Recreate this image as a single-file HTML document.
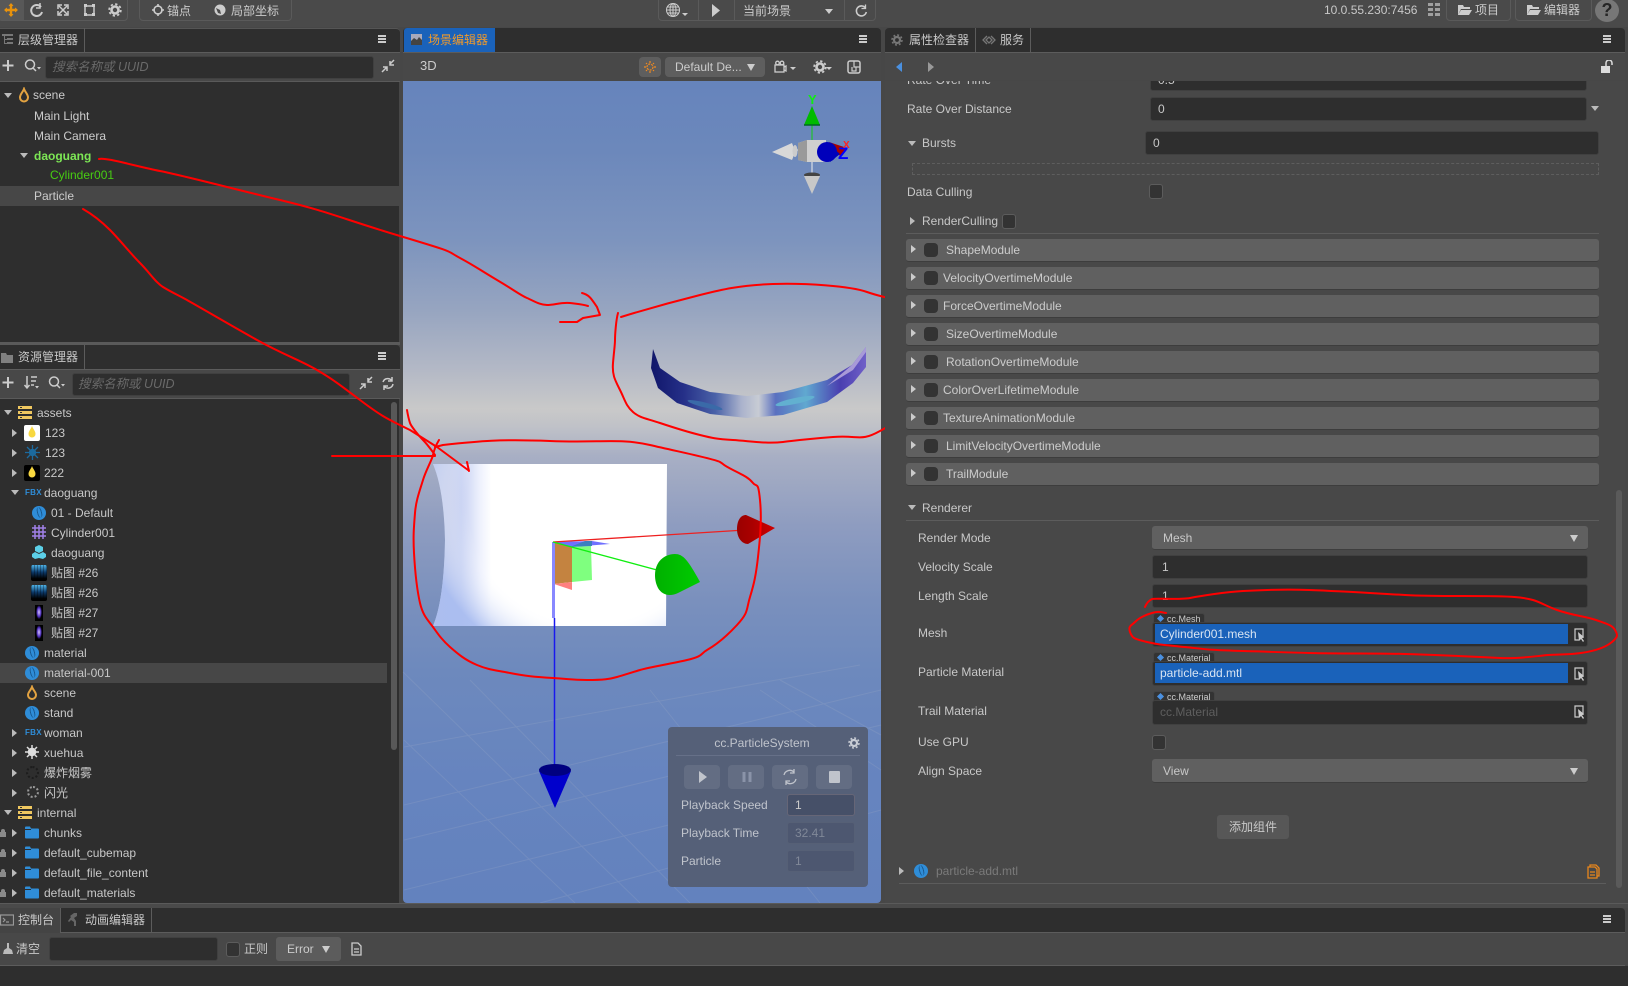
<!DOCTYPE html>
<html lang="zh"><head><meta charset="utf-8"><title>Cocos Creator</title>
<style>
html,body{margin:0;padding:0;width:1628px;height:986px;overflow:hidden;background:#474747}
body{position:relative;font:12px/20px "Liberation Sans","Noto Sans CJK SC",sans-serif;color:#c8c8c8}
.a,.t,.i,.cb,.g{position:absolute}
.t{white-space:nowrap;height:20px}
.bar{position:absolute;background:#2e2e2e;border-bottom:1px solid #5c5c5c;box-sizing:border-box}
.in{position:absolute;background:#2e2e2e;border:1px solid #404040;border-radius:3px;box-sizing:border-box}
.grp{position:absolute;top:-2px;height:23px;border:1px solid #5a5a5a;border-radius:0 0 4px 4px;box-sizing:border-box}
.sel{position:absolute;background:#606060;border-bottom:1px solid #3e3e3e;border-radius:3px;box-sizing:border-box}
.cb{width:14px;height:15px;background:#333;border:1px solid #5c5c5c;border-radius:3px;box-sizing:border-box}
.m{position:absolute;left:906px;width:693px;height:23px;background:#606060;border-radius:3px;border-bottom:1px solid #3d3d3d;box-sizing:border-box}
.m i{position:absolute;left:5px;top:6px;width:0;height:0;border-left:5px solid #ccc;border-top:4px solid transparent;border-bottom:4px solid transparent}
.m b{position:absolute;left:18px;top:4px;width:14px;height:14px;background:#333;border-radius:4px}
.m span{position:absolute;top:1px;line-height:21px;white-space:nowrap;color:#ccc}
.r,.d{position:absolute;width:0;height:0}
.r{border-left:5px solid #bbb;border-top:4px solid transparent;border-bottom:4px solid transparent}
.d{border-top:5px solid #bbb;border-left:4px solid transparent;border-right:4px solid transparent}
.ham{position:absolute;width:8px;height:8px;box-sizing:border-box;border-top:2px solid #ccc;border-bottom:2px solid #ccc}
.ham:after{content:"";position:absolute;left:0;right:0;top:1px;height:2px;background:#ccc}
.tag{position:absolute;height:10px;background:#333;border:1px solid #444;border-bottom:0;border-radius:3px 3px 0 0;font-size:9px;line-height:10px;color:#ccc;padding-left:13px;box-sizing:border-box}
.tag:before{content:"";position:absolute;left:4px;top:2px;width:5px;height:5px;background:#4a90e0;transform:rotate(45deg)}
.blue{position:absolute;background:#1a62ba;color:#d8e4f2;line-height:20px;padding-left:5px;box-sizing:border-box}
.mat{position:absolute;width:14px;height:14px;border-radius:50%;background:#2f8dd8}
.mat:after{content:"";position:absolute;left:5px;top:1px;width:3px;height:11px;border-left:1px solid #17568c;border-right:1px solid #17568c;border-radius:50%;transform:rotate(-15deg)}
.pb{position:absolute;top:765px;width:36px;height:24px;background:#636d83;border-radius:4px}
.pi{position:absolute;left:787px;width:68px;height:22px;border:1px solid #566076;border-radius:3px;box-sizing:border-box;line-height:20px;padding-left:7px}
.dk{position:absolute;width:16px;height:16px;border-radius:2px;background:repeating-linear-gradient(90deg,rgba(0,0,0,.3) 0 1px,transparent 1px 3px),linear-gradient(#4fb4e8,#0c3a6a 45%,#000 85%)}
.pr{position:absolute;width:8px;height:16px;background:radial-gradient(ellipse 3px 7px at 50% 45%,#d8c8ff,#5030c0 65%,#000 100%)}
</style></head><body>

<svg width="0" height="0" style="position:absolute"><defs>
<symbol id="db" viewBox="0 0 14 13"><path d="M0 0h14v3H0zM0 5h14v3H0zM0 10h14v3H0z" fill="#f0c860"/><path d="M2 1h2v1H2zM2 6h2v1H2zM2 11h2v1H2z" fill="#333"/></symbol>
<symbol id="fo" viewBox="0 0 14 13"><path d="M0 1.500A1 1 0 0 1 1 .5h4l1 2h7a1 1 0 0 1 1 1v8a1 1 0 0 1-1 1H1a1 1 0 0 1-1-1z" fill="#2f8dd8"/><path d="M0 3h6v1H0z" fill="#2e2e2e"/></symbol>
<symbol id="lk" viewBox="0 0 8 8"><path d="M2 3V2a2 2 0 0 1 4 0v1h1v5H1V3z" fill="#8a8a8a"/></symbol>
<symbol id="gear" viewBox="0 0 14 14"><circle cx="7" cy="7" r="3.500" fill="none" stroke="currentColor" stroke-width="2.600"/><circle cx="7" cy="7" r="5.800" fill="none" stroke="currentColor" stroke-width="1.800" stroke-dasharray="2.300 2.250"/></symbol>
</defs></svg>

<!-- TOP TOOLBAR -->
<div class="a" style="left:0;top:0;width:1628px;height:27px;background:#4a4a4a"></div>
<div class="grp" style="left:-2px;width:130px"></div>
<div class="a" style="left:0;top:0;width:24px;height:20px;background:#585858"></div>
<svg class="a" style="left:0;top:0" width="130" height="22" fill="none" stroke="#ccc" stroke-width="2">
<path d="M11 4v12M5 10h12" stroke="#e8920c" stroke-width="2.400"/><path d="M11 3l-2.500 3h5zM11 17l-2.500-3h5zM4 10l3-2.500v5zM18 10l-3-2.500v5z" fill="#e8920c" stroke="none"/>
<path d="M41 7a5.500 5.500 0 1 0 1 5"/><path d="M40 3v5h-4" stroke-width="1.500"/>
<path d="M59 6l8 8M67 6l-8 8" stroke-width="1.500"/><path d="M58 9V5h4M64 5h4v4M68 11v4h-4M62 15h-4v-4" stroke-width="1.500"/>
<rect x="85" y="6" width="9" height="9" stroke-width="1.500"/><rect x="84" y="4" width="3" height="3" fill="#ccc" stroke="none"/><rect x="92" y="4" width="3" height="3" fill="#ccc" stroke="none"/><rect x="84" y="13" width="3" height="3" fill="#ccc" stroke="none"/><rect x="92" y="13" width="3" height="3" fill="#ccc" stroke="none"/>
</svg>
<svg class="a" style="left:108px;top:3px;color:#ccc" width="14" height="14"><use href="#gear"/></svg>
<div class="grp" style="left:139px;width:153px"></div>
<svg class="a" style="left:150px;top:2px" width="80" height="18" fill="none" stroke="#ccc" stroke-width="1.600"><circle cx="8" cy="8" r="4"/><path d="M8 2v3M8 11v3M2 8h3M11 8h3"/><circle cx="70" cy="8" r="5.500" fill="#ccc" stroke="none"/><path d="M66 6l4 2 1 4-3-1z" fill="#4a4a4a" stroke="none"/></svg>
<div class="t" style="left:167px;top:1px;color:#ccc">锚点</div>
<div class="t" style="left:231px;top:1px;color:#ccc">局部坐标</div>
<div class="grp" style="left:658px;width:218px"></div>
<div class="a" style="left:698px;top:0;width:1px;height:21px;background:#5a5a5a"></div>
<div class="a" style="left:734px;top:0;width:1px;height:21px;background:#5a5a5a"></div>
<div class="a" style="left:844px;top:0;width:1px;height:21px;background:#5a5a5a"></div>
<svg class="a" style="left:665px;top:2px" width="26" height="18" fill="none" stroke="#ccc" stroke-width="1"><circle cx="8" cy="8" r="6.500"/><ellipse cx="8" cy="8" rx="3" ry="6.500"/><path d="M1.500 8h13M2.500 5h11M2.500 11h11M8 1.500v13"/><path d="M17 11h6l-3 3z" fill="#ccc" stroke="none"/></svg>
<svg class="a" style="left:710px;top:3px" width="14" height="16"><path d="M2 1l8 6.500-8 6.500z" fill="#ccc"/></svg>
<div class="t" style="left:743px;top:1px;color:#ccc">当前场景</div>
<div class="d" style="left:825px;top:9px;border-top-color:#ccc;border-left-width:4px;border-right-width:4px"></div>
<svg class="a" style="left:853px;top:3px" width="16" height="16" fill="none" stroke="#ccc" stroke-width="1.600"><path d="M12.500 5a5 5 0 1 0 .8 4"/><path d="M12.500 1.500V5.500H8.500" stroke-width="1.300"/></svg>
<div class="t" style="left:1324px;top:0;color:#c8c8c8">10.0.55.230:7456</div>
<svg class="a" style="left:1428px;top:3px" width="13" height="13" fill="#a0a0a0"><rect x="0" y="0" width="5" height="3"/><rect x="7" y="0" width="5" height="3"/><rect x="0" y="5" width="5" height="3"/><rect x="7" y="5" width="5" height="3"/><rect x="0" y="10" width="5" height="3"/><rect x="7" y="10" width="5" height="3"/></svg>
<div class="grp" style="left:1446px;width:65px"></div>
<div class="grp" style="left:1515px;width:77px"></div>
<svg class="a" style="left:1458px;top:4px" width="14" height="12"><path d="M0 1h5l1 2h6v2H3L0 11zM3 6h11l-3 5H0z" fill="#ccc"/></svg>
<svg class="a" style="left:1527px;top:4px" width="14" height="12"><path d="M0 1h5l1 2h6v2H3L0 11zM3 6h11l-3 5H0z" fill="#ccc"/></svg>
<div class="t" style="left:1475px;top:0;color:#ccc">项目</div>
<div class="t" style="left:1544px;top:0;color:#ccc">编辑器</div>
<div class="a" style="left:1595px;top:-1px;width:24px;height:23px;border-radius:50%;background:#777;text-align:center;font-weight:bold;font-size:18px;line-height:23px;color:#262626">?</div>

<!-- HIERARCHY -->
<div class="bar" style="left:0;top:28px;width:400px;height:25px;border-radius:0 4px 0 0;border-top:1px solid #555"></div>
<div class="a" style="left:84px;top:28px;width:1px;height:24px;background:#5c5c5c"></div>
<svg class="a" style="left:2px;top:33px" width="12" height="13" fill="#777"><path d="M0 1h11v2H0zM5 5h6v2H5zM5 9h6v2H5zM2 3h1v8H2zM2 6h3v1H2zM2 10h3v1H2z"/></svg>
<div class="t" style="left:18px;top:30px">层级管理器</div>
<div class="ham" style="left:378px;top:35px"></div>
<div class="a" style="left:0;top:53px;width:400px;height:29px;background:#484848;border-bottom:1px solid #5a5a5a;box-sizing:border-box"></div>
<svg class="a" style="left:0;top:54px" width="45" height="24" fill="none" stroke="#ccc"><path d="M8 6v11M2.500 11.500h11" stroke-width="2"/><circle cx="30" cy="10.500" r="4.500" stroke-width="1.500"/><path d="M33 14l3 3" stroke-width="1.500"/><path d="M37 13h4l-2 2.500z" fill="#ccc" stroke="none"/></svg>
<div class="in" style="left:45px;top:56px;width:329px;height:23px"></div>
<div class="t" style="left:52px;top:57px;font-style:italic;color:#6a6a6a;font-size:12.500px">搜索名称或 UUID</div>
<svg class="a" style="left:381px;top:59px" width="15" height="15" fill="none" stroke="#ccc" stroke-width="1.500"><path d="M1 13l5-5M2 8h4v4M13 1L9 5M9 2v4h4" /></svg>
<div class="a" style="left:0;top:82px;width:399px;height:260px;background:#2e2e2e"></div>
<div class="d" style="left:4px;top:93px"></div>
<svg class="a" style="left:17px;top:87px" width="14" height="17" fill="none" stroke="#e3a341" stroke-width="2"><path d="M7 2C6 5 3 7 3 10.500a4 4 0 0 0 8 0C11 7 8 5 7 2z"/></svg>
<div class="t" style="left:33px;top:85px;color:#ccc">scene</div>
<div class="t" style="left:34px;top:106px;color:#ccc">Main Light</div>
<div class="t" style="left:34px;top:126px;color:#ccc">Main Camera</div>
<div class="d" style="left:20px;top:153px"></div>
<div class="t" style="left:34px;top:146px;color:#7de855;font-weight:bold">daoguang</div>
<div class="t" style="left:50px;top:165px;color:#47cc12">Cylinder001</div>
<div class="a" style="left:0;top:186px;width:399px;height:20px;background:#474747"></div>
<div class="t" style="left:34px;top:186px;color:#ccc">Particle</div>

<!-- ASSETS -->
<div class="a" style="left:0;top:342px;width:400px;height:3px;background:#5a5a5a"></div>
<div class="bar" style="left:0;top:345px;width:400px;height:25px;border-radius:0 4px 0 0"></div>
<div class="a" style="left:84px;top:345px;width:1px;height:24px;background:#5c5c5c"></div>
<svg class="a" style="left:1px;top:352px" width="13" height="12"><path d="M0 1h5l1 2h6v8H0z" fill="#808080"/></svg>
<div class="t" style="left:18px;top:347px">资源管理器</div>
<div class="ham" style="left:378px;top:352px"></div>
<div class="a" style="left:0;top:370px;width:400px;height:29px;background:#484848;border-bottom:1px solid #5a5a5a;box-sizing:border-box"></div>
<svg class="a" style="left:0;top:371px" width="72" height="24" fill="none" stroke="#ccc"><path d="M8 6v11M2.500 11.500h11" stroke-width="2"/><path d="M27 5v12M24.500 14l2.500 3 2.500-3M31 6h6M31 10h5M31 14h3" stroke-width="1.500"/><path d="M35 15h4l-2 2.500z" fill="#ccc" stroke="none"/><circle cx="54" cy="10.500" r="4.500" stroke-width="1.500"/><path d="M57 14l3 3" stroke-width="1.500"/><path d="M61 13h4l-2 2.500z" fill="#ccc" stroke="none"/></svg>
<div class="in" style="left:72px;top:373px;width:278px;height:23px"></div>
<div class="t" style="left:78px;top:374px;font-style:italic;color:#6a6a6a;font-size:12.500px">搜索名称或 UUID</div>
<svg class="a" style="left:359px;top:376px" width="38" height="15" fill="none" stroke="#ccc" stroke-width="1.500"><path d="M1 13l5-5M2 8h4v4M13 1L9 5M9 2v4h4"/><path d="M24 6a5 5 0 0 1 9-1M34 8a5 5 0 0 1-9 2M33 1v4h-4M25 14v-4h4"/></svg>
<div class="a" style="left:0;top:399px;width:399px;height:504px;background:#2e2e2e;overflow:hidden"></div>
<div class="a" style="left:391px;top:402px;width:6px;height:348px;background:#585858;border-radius:3px"></div>
<div class="a" style="left:0;top:663px;width:387px;height:20px;background:#474747"></div>

<div class="d" style="left:4px;top:410px"></div>
<svg class="a" style="left:18px;top:406px" width="14" height="13"><use href="#db"/></svg>
<div class="t" style="left:37px;top:403px">assets</div>
<div class="r" style="left:12px;top:429px"></div>
<div class="a" style="left:24px;top:425px;width:16px;height:16px;background:#fff;border-radius:2px"></div>
<svg class="a" style="left:28px;top:426px" width="8" height="13"><path d="M4 0C3 3 .5 5 .5 8a3.500 3.500 0 0 0 7 0C7.500 5 5 3 4 0z" fill="#f8d840"/></svg>
<div class="t" style="left:45px;top:423px">123</div>
<div class="r" style="left:12px;top:449px"></div>
<svg class="a" style="left:25px;top:445px" width="15" height="15" stroke="#1c6a9e" stroke-width="1.300" fill="none"><path d="M7.500 0v15M0 7.500h15M2 2l11 11M13 2L2 13"/><circle cx="7.500" cy="7.500" r="3" fill="#1c6a9e"/></svg>
<div class="t" style="left:45px;top:443px">123</div>
<div class="r" style="left:12px;top:469px"></div>
<div class="a" style="left:24px;top:465px;width:16px;height:16px;background:#000;border-radius:2px"></div>
<svg class="a" style="left:28px;top:466px" width="8" height="13"><path d="M4 0C3 3 .5 5 .5 8a3.500 3.500 0 0 0 7 0C7.500 5 5 3 4 0z" fill="#f8d840"/></svg>
<div class="t" style="left:44px;top:463px">222</div>
<div class="d" style="left:11px;top:490px"></div>
<div class="t" style="left:25px;top:483px;font-size:8px;font-weight:bold;color:#2f8dd8;letter-spacing:.3px">FBX</div>
<div class="t" style="left:44px;top:483px">daoguang</div>

<div class="mat" style="left:32px;top:506px"></div>
<div class="t" style="left:51px;top:503px">01 - Default</div>
<svg class="a" style="left:32px;top:525px" width="14" height="14" stroke="#a080e8" stroke-width="1.500"><path d="M3 0v14M7 0v14M11 0v14M0 3h14M0 7h14M0 11h14"/></svg>
<div class="t" style="left:51px;top:523px">Cylinder001</div>
<svg class="a" style="left:32px;top:545px" width="14" height="14" fill="#5cd0e8"><path d="M7 0l4 2v4L7 8 3 6V2zM3 7l4 2v4l-4 1-3-2V9zM11 7l3 2v3l-3 2-4-1V9z"/></svg>
<div class="t" style="left:51px;top:543px">daoguang</div>
<div class="dk" style="left:31px;top:565px"></div>
<div class="t" style="left:51px;top:563px">贴图 #26</div>
<div class="dk" style="left:31px;top:585px"></div>
<div class="t" style="left:51px;top:583px">贴图 #26</div>
<div class="pr" style="left:35px;top:605px"></div>
<div class="t" style="left:51px;top:603px">贴图 #27</div>
<div class="pr" style="left:35px;top:625px"></div>
<div class="t" style="left:51px;top:623px">贴图 #27</div>
<div class="mat" style="left:25px;top:646px"></div>
<div class="t" style="left:44px;top:643px">material</div>
<div class="mat" style="left:25px;top:666px"></div>
<div class="t" style="left:44px;top:663px">material-001</div>
<svg class="a" style="left:25px;top:685px" width="14" height="16" fill="none" stroke="#e3a341" stroke-width="2"><path d="M7 2C6 5 3 7 3 10a4 4 0 0 0 8 0C11 7 8 5 7 2z"/></svg>
<div class="t" style="left:44px;top:683px">scene</div>
<div class="mat" style="left:25px;top:706px"></div>
<div class="t" style="left:44px;top:703px">stand</div>
<div class="r" style="left:12px;top:729px"></div>
<div class="t" style="left:25px;top:723px;font-size:8px;font-weight:bold;color:#2f8dd8;letter-spacing:.3px">FBX</div>
<div class="t" style="left:44px;top:723px">woman</div>
<div class="r" style="left:12px;top:749px"></div>
<svg class="a" style="left:25px;top:745px" width="14" height="14" stroke="#ddd" stroke-width="1.500" fill="none"><path d="M7 0v14M0 7h14M2 2l10 10M12 2L2 12"/><circle cx="7" cy="7" r="3.500" fill="#ddd"/></svg>
<div class="t" style="left:44px;top:743px">xuehua</div>
<div class="r" style="left:12px;top:769px"></div>
<div class="a" style="left:26px;top:766px;width:9px;height:9px;border:2px dotted #1d1d1d;border-radius:50%"></div>
<div class="t" style="left:44px;top:763px">爆炸烟雾</div>
<div class="r" style="left:12px;top:789px"></div>
<div class="a" style="left:27px;top:786px;width:8px;height:8px;border:2px dotted #999;border-radius:50%"></div>
<div class="t" style="left:44px;top:783px">闪光</div>
<div class="d" style="left:4px;top:810px"></div>
<svg class="a" style="left:18px;top:806px" width="14" height="13"><use href="#db"/></svg>
<div class="t" style="left:37px;top:803px">internal</div>

<svg class="a" style="left:-1px;top:829px" width="8" height="8"><use href="#lk"/></svg><div class="r" style="left:12px;top:829px"></div>
<svg class="a" style="left:25px;top:826px" width="14" height="13"><use href="#fo"/></svg><div class="t" style="left:44px;top:823px">chunks</div>
<svg class="a" style="left:-1px;top:849px" width="8" height="8"><use href="#lk"/></svg><div class="r" style="left:12px;top:849px"></div>
<svg class="a" style="left:25px;top:846px" width="14" height="13"><use href="#fo"/></svg><div class="t" style="left:44px;top:843px">default_cubemap</div>
<svg class="a" style="left:-1px;top:869px" width="8" height="8"><use href="#lk"/></svg><div class="r" style="left:12px;top:869px"></div>
<svg class="a" style="left:25px;top:866px" width="14" height="13"><use href="#fo"/></svg><div class="t" style="left:44px;top:863px">default_file_content</div>
<svg class="a" style="left:-1px;top:889px" width="8" height="8"><use href="#lk"/></svg><div class="r" style="left:12px;top:889px"></div>
<svg class="a" style="left:25px;top:886px" width="14" height="13"><use href="#fo"/></svg><div class="t" style="left:44px;top:883px">default_materials</div>

<!-- SCENE -->
<div class="bar" style="left:403px;top:28px;width:478px;height:25px;border-radius:4px 4px 0 0"></div>
<div class="a" style="left:404px;top:28px;width:91px;height:24px;background:#1a62ba;border-radius:3px 0 0 0"></div>
<svg class="a" style="left:411px;top:34px" width="13" height="12"><rect width="11" height="11" fill="#aab"/><path d="M0 7l3-3 3 2 2-3 3 3v5H0z" fill="#444"/></svg>
<div class="t" style="left:428px;top:30px;color:#f19a2a">场景编辑器</div>
<div class="ham" style="left:859px;top:35px"></div>
<div class="a" style="left:403px;top:53px;width:478px;height:28px;background:#484848"></div>
<div class="t" style="left:420px;top:56px;font-size:13px;color:#ccc">3D</div>
<div class="a" style="left:639px;top:57px;width:22px;height:20px;background:#5e5e5e;border-radius:4px"></div>
<svg class="a" style="left:644px;top:61px" width="12" height="12" fill="none" stroke="#f08a20" stroke-width="1.200" stroke-dasharray="2 1"><circle cx="6" cy="6" r="3"/><path d="M6 0v2M6 10v2M0 6h2M10 6h2M2 2l1 1M9 9l1 1M10 2L9 3M3 9l-1 1"/></svg>
<div class="a" style="left:665px;top:57px;width:100px;height:20px;background:#5e5e5e;border-radius:4px"></div>
<div class="t" style="left:675px;top:57px;color:#ccc">Default De...</div>
<div class="a" style="left:747px;top:64px;width:0;height:0;border-top:7px solid #ccc;border-left:4px solid transparent;border-right:4px solid transparent"></div>
<svg class="a" style="left:774px;top:60px" width="90" height="16" fill="none" stroke="#ccc" stroke-width="1.300"><rect x="1" y="5" width="9" height="7"/><circle cx="3.500" cy="3" r="1.800"/><circle cx="8" cy="3" r="1.800"/><path d="M10 7l2-1v5l-2-1"/><path d="M16 7h6l-3 3z" fill="#ccc" stroke="none"/><path d="M52 7h6l-3 3z" fill="#ccc" stroke="none"/><rect x="74" y="1" width="12" height="12" rx="2" stroke-width="1.500"/><path d="M80 1v6h6M78 7v4h4V7" stroke-width="1.200"/></svg>
<svg class="a" style="left:813px;top:60px;color:#ccc" width="14" height="14"><use href="#gear"/></svg>

<div class="a" style="left:403px;top:81px;width:478px;height:822px;border-radius:0 0 4px 4px;overflow:hidden;background:linear-gradient(#6684bc 0,#6c88bb 70px,#7d94be 160px,#97a5c0 230px,#b4b9c6 290px,#c9c9c9 328px,#c0c2c8 345px,#a8afc4 375px,#8e9cc0 445px,#7a90bd 520px,#6d89bd 590px,#6684bf 700px,#6382be 822px)"></div>

<svg class="a" style="left:0;top:0" width="1628" height="986" fill="none">
<defs>
<linearGradient id="cr" x1="0" x2="1" y1="0" y2="0"><stop offset="0" stop-color="#10166a"/><stop offset=".15" stop-color="#252f88"/><stop offset=".3" stop-color="#4a62a8"/><stop offset=".42" stop-color="#aab2cc"/><stop offset=".5" stop-color="#c8ccd4"/><stop offset=".58" stop-color="#5a70c0"/><stop offset=".72" stop-color="#60a8d0"/><stop offset=".88" stop-color="#4a3fb0"/><stop offset="1" stop-color="#7060c8"/></linearGradient>
<linearGradient id="wh" x1="0" x2="1" y1="0" y2="0"><stop offset="0" stop-color="#d0d4e6"/><stop offset=".06" stop-color="#c8cfea"/><stop offset=".12" stop-color="#c6d0f2"/><stop offset=".2" stop-color="#eef1fd"/><stop offset=".25" stop-color="#fff"/></linearGradient>
<radialGradient id="wb" gradientUnits="userSpaceOnUse" cx="590" cy="500" r="170"><stop offset=".72" stop-color="#fff" stop-opacity="0"/><stop offset="1" stop-color="#a8bcf0" stop-opacity=".9"/></radialGradient>
<linearGradient id="rc" x1="0" x2="1"><stop offset="0" stop-color="#9a0000"/><stop offset=".4" stop-color="#aa0000"/><stop offset="1" stop-color="#d00000"/></linearGradient>
<linearGradient id="gc" x1="0" x2="1"><stop offset="0" stop-color="#00b000"/><stop offset="1" stop-color="#00cc00"/></linearGradient>
</defs>
<!-- grid -->
<g stroke="#a8b4c8" stroke-opacity=".2" stroke-width="1">
<path d="M404 747L860 665M404 805L881 690M404 840L881 725M404 890L750 805M540 903L881 810M403 672L640 903M404 740L575 903M470 680L690 903M650 690L820 903M760 690L881 770M780 680L881 735"/>
</g>
<!-- crescent -->
<path d="M653 349L651 368 658 388 677 403 710 414 747 418 783 415 827 402 853 383 866 367 866 347 852 365 827 380 783 392 747 396 710 392 680 382 660 368Z" fill="url(#cr)"/>
<path d="M852 365L866 347V352L853 370 827 386Z" fill="#a89ad8"/>
<ellipse cx="795" cy="401" rx="20" ry="3" fill="#62b0d0" transform="rotate(-12 795 401)"/>
<ellipse cx="705" cy="405" rx="18" ry="2.500" fill="#3a6aa8" transform="rotate(14 705 405)"/>
<!-- white mesh -->
<path d="M433 464H667L666 626 433 626Q444 600 445 540 444 490 433 464Z" fill="url(#wh)"/>
<path d="M433 464H667L666 626 433 626Q444 600 445 540 444 490 433 464Z" fill="url(#wb)"/>
<!-- handles -->
<path d="M553 542L592 541 610 544 570 547Z" fill="#7070ff"/>
<path d="M572 547L591 546 592 580 572 582Z" fill="#7fff7f"/>
<path d="M585 541L592 541 592 546 570 547Z" fill="#3c80c0"/>
<path d="M553 542L572 547 572 582 554 584Z" fill="#c48340"/>
<path d="M554 584L572 582 572 590Z" fill="#ff8080"/>
<path d="M553.500 542V618" stroke="#8888ff" stroke-width="3"/>
<path d="M554.500 618V770" stroke="#1818ee" stroke-width="1.500"/>
<path d="M553 542L745 530" stroke="#ee2020" stroke-width="1.300"/>
<path d="M553 542L657 570" stroke="#10ee10" stroke-width="1.300"/>
<path d="M737 529C737 520 741 515 746 515L775 528 748 544C742 544 737 538 737 529Z" fill="url(#rc)"/>
<path d="M655 575C655 562 664 554 675 554 683 554 688 560 700 582L678 593C670 597 662 595 658 588 656 584 655 580 655 575Z" fill="url(#gc)"/>
<path d="M539 771L571 771 555 808Z" fill="#0000cc"/>
<ellipse cx="555" cy="770" rx="16" ry="6" fill="#000080"/>
<!-- gizmo -->
<path d="M812 125V140" stroke="#10cc10"/>
<path d="M812 106L820 125H804Z" fill="#00bb00"/>
<path d="M804 125H820" stroke="#062" stroke-width="1.500"/>
<path d="M792 150H798M812 162V174" stroke="#eee"/>
<path d="M772 152L792 143Q796 152 792 160Z" fill="#d8d8d8"/>
<ellipse cx="795" cy="151" rx="2.500" ry="6" fill="#ccc"/>
<path d="M798 143L807 140H826V162H807L798 160Z" fill="#cfcfcf"/>
<path d="M798 143L807 140V162L798 160Z" fill="#9a9a9a"/>
<ellipse cx="812" cy="175" rx="8" ry="2.500" fill="#444"/>
<path d="M804 176H820L812 194Z" fill="#c8c8c8"/>
<path d="M829 142L847 148 840 156Z" fill="#a80000"/>
<circle cx="827" cy="152" r="10" fill="#0000bb"/>
<path d="M826 142L840 154 830 162Z" fill="#0000bb"/>
<!-- red annotations -->
<g stroke="#ff0000" stroke-width="2" stroke-linecap="round" stroke-linejoin="round">
<path d="M99 159C105 157 135 166 160 171S230 188 280 200 340 218 400 236 445 250 460 258 480 270 497 280 520 295 527 298 540 305 547 305 562 302 570 303 582 304 588 306"/>
<path d="M582 293C590 295 592 300 597 307L600 315 583 318 577 322 560 322"/>
<path d="M621 317C660 305 680 300 700 295S740 285 773 284 850 286 867 292 895 298 904 305 920 318 923 323 932 340 931.500 347 933 365 930 373 922 395 916 403 900 420 880 431 860 435 833 437 800 440 783 442 750 441 733 440 712 438 700 435 675 428 660 423 640 418 633 412 625 400 620 390 612 375 613 363 615 345 615 340 616 320 618 313"/>
<path d="M439 440C436 445 434 450 433 455S426 470 423 480 416 500 415 513 413 535 414 553 417 590 420 603 428 620 433 627 442 640 450 647 465 660 477 665 495 670 510 673 535 677 553 678 570 680 587 680 610 679 617 677 630 673 640 670 670 664 687 660 700 654 707 650 725 638 737 625 746 610 750 597 756 575 758 557 762 520 760 500 757 488 753 483 745 476 733 470 725 465 720 462 680 452 650 445 600 443 550 441 480 441 443 445L435 447"/>
<path d="M83 209C90 213 100 220 110 230S130 253 140 263 155 282 163 287 178 295 187 300 230 325 257 340 300 360 317 370 340 385 360 400 385 418 410 430L437 447 468 470"/>
<path d="M467 462L469 471"/>
<path d="M332 456H435"/>
<path d="M407 410C408 416 409 420 410 423S418 435 423 440 432 451 435 455"/>
</g>
</svg>
<div class="t" style="left:808px;top:90px;color:#10ee10;font-weight:bold;font-size:13px">Y</div>
<div class="t" style="left:838px;top:144px;color:#0000ff;font-weight:bold;font-size:17px">Z</div>
<div class="t" style="left:843px;top:136px;color:#ff2020;font-size:10px;font-weight:bold">X</div>

<!-- particle panel -->
<div class="a" style="left:668px;top:727px;width:200px;height:160px;background:#556078;border-radius:4px"></div>
<div class="t" style="left:668px;top:733px;width:188px;text-align:center;color:#c0c4cc">cc.ParticleSystem</div>
<svg class="a" style="left:848px;top:737px;color:#c8ccd4" width="12" height="12"><use href="#gear"/></svg>
<div class="a" style="left:676px;top:755px;width:184px;height:1px;background:#667088"></div>
<div class="pb" style="left:684px"></div><div class="pb" style="left:728px"></div><div class="pb" style="left:772px"></div><div class="pb" style="left:816px"></div>
<svg class="a" style="left:684px;top:765px" width="170" height="24" fill="#c0c4cc"><path d="M15 6l8 6-8 6z"/><path d="M58.500 7h3v10h-3zM64.500 7h3v10h-3z" fill="#8a93a8"/><path d="M100 10a6 6 0 0 1 10-3M112 14a6 6 0 0 1-10 3M110 4v4h-4M102 20v-4h4" fill="none" stroke="#c0c4cc" stroke-width="1.300"/><rect x="145" y="6" width="11" height="12" rx="1"/></svg>
<div class="t" style="left:681px;top:795px;color:#c0c4cc">Playback Speed</div>
<div class="pi" style="top:794px;background:#465068;color:#ccc;border-color:#667">1</div>
<div class="t" style="left:681px;top:823px;color:#c0c4cc">Playback Time</div>
<div class="pi" style="top:822px;background:#4d5770;color:#808898">32.41</div>
<div class="t" style="left:681px;top:851px;color:#c0c4cc">Particle</div>
<div class="pi" style="top:850px;background:#4d5770;color:#808898">1</div>

<!-- INSPECTOR -->
<div class="bar" style="left:885px;top:28px;width:740px;height:25px;border-radius:4px 4px 0 0"></div>
<div class="a" style="left:975px;top:28px;width:1px;height:24px;background:#5c5c5c"></div>
<div class="a" style="left:1030px;top:28px;width:1px;height:24px;background:#5c5c5c"></div>
<svg class="a" style="left:891px;top:34px;color:#777" width="12" height="12"><use href="#gear"/></svg>
<div class="t" style="left:909px;top:30px">属性检查器</div>
<svg class="a" style="left:982px;top:35px" width="14" height="10" fill="none" stroke="#777" stroke-width="1.300"><path d="M5 1L1 5l4 4M9 1l4 4-4 4M4 5l3-3 3 3-3 3z"/></svg>
<div class="t" style="left:1000px;top:30px">服务</div>
<div class="ham" style="left:1603px;top:35px"></div>
<div class="a" style="left:885px;top:53px;width:740px;height:27px;background:#484848"></div>
<svg class="a" style="left:896px;top:62px" width="40" height="11"><path d="M6 0L0 5l6 5z" fill="#4a90e0"/><path d="M32 0l6 5-6 5z" fill="#999"/></svg>
<svg class="a" style="left:1600px;top:60px" width="14" height="14"><rect x="1" y="6" width="9" height="7" fill="#ddd"/><path d="M6 6V3a3 3 0 0 1 6 0v2" fill="none" stroke="#ddd" stroke-width="1.500"/></svg>

<div class="a" style="left:885px;top:81px;width:740px;height:823px;background:#484848;overflow:hidden"></div>
<div class="a" style="left:885px;top:81px;width:740px;height:11px;overflow:hidden">
 <div class="t" style="left:22px;top:-11px">Rate Over Time</div>
 <div class="in" style="left:265px;top:-14px;width:437px;height:24px"></div>
 <div class="t" style="left:273px;top:-11px">0.5</div>
</div>
<div class="t" style="left:907px;top:99px">Rate Over Distance</div>
<div class="in" style="left:1150px;top:97px;width:437px;height:24px"></div>
<div class="t" style="left:1158px;top:99px">0</div>
<div class="d" style="left:1591px;top:106px"></div>
<div class="d" style="left:908px;top:141px"></div>
<div class="t" style="left:922px;top:133px">Bursts</div>
<div class="in" style="left:1145px;top:131px;width:454px;height:24px"></div>
<div class="t" style="left:1153px;top:133px">0</div>
<div class="a" style="left:912px;top:163px;width:687px;height:12px;border:1px dashed #5e5e5e;box-sizing:border-box"></div>
<div class="t" style="left:907px;top:182px">Data Culling</div>
<div class="cb" style="left:1149px;top:184px"></div>
<div class="r" style="left:910px;top:217px"></div>
<div class="t" style="left:922px;top:211px">RenderCulling</div>
<div class="cb" style="left:1002px;top:214px"></div>
<div class="a" style="left:906px;top:233px;width:693px;height:1px;background:#5c5c5c"></div>

<div class="m" style="top:239px"><i></i><b></b><span style="left:40px">ShapeModule</span></div>
<div class="m" style="top:267px"><i></i><b></b><span style="left:37px">VelocityOvertimeModule</span></div>
<div class="m" style="top:295px"><i></i><b></b><span style="left:37px">ForceOvertimeModule</span></div>
<div class="m" style="top:323px"><i></i><b></b><span style="left:40px">SizeOvertimeModule</span></div>
<div class="m" style="top:351px"><i></i><b></b><span style="left:40px">RotationOvertimeModule</span></div>
<div class="m" style="top:379px"><i></i><b></b><span style="left:37px">ColorOverLifetimeModule</span></div>
<div class="m" style="top:407px"><i></i><b></b><span style="left:37px">TextureAnimationModule</span></div>
<div class="m" style="top:435px"><i></i><b></b><span style="left:40px">LimitVelocityOvertimeModule</span></div>
<div class="m" style="top:463px"><i></i><b></b><span style="left:40px">TrailModule</span></div>

<div class="d" style="left:908px;top:505px"></div>
<div class="t" style="left:922px;top:498px">Renderer</div>
<div class="a" style="left:906px;top:520px;width:693px;height:1px;background:#5c5c5c"></div>

<div class="t" style="left:918px;top:528px">Render Mode</div>
<div class="sel" style="left:1152px;top:526px;width:436px;height:24px"></div>
<div class="t" style="left:1163px;top:528px">Mesh</div>
<div class="a" style="left:1570px;top:535px;width:0;height:0;border-top:7px solid #ccc;border-left:4px solid transparent;border-right:4px solid transparent"></div>
<div class="t" style="left:918px;top:557px">Velocity Scale</div>
<div class="in" style="left:1152px;top:555px;width:436px;height:24px"></div>
<div class="t" style="left:1162px;top:557px">1</div>
<div class="t" style="left:918px;top:586px">Length Scale</div>
<div class="in" style="left:1152px;top:584px;width:436px;height:24px"></div>
<div class="t" style="left:1162px;top:586px">1</div>

<div class="t" style="left:918px;top:623px">Mesh</div>
<div class="tag" style="left:1153px;top:613px;width:52px">cc.Mesh</div>
<div class="in" style="left:1152px;top:622px;width:436px;height:25px"></div>
<div class="blue" style="left:1155px;top:624px;width:413px;height:20px">Cylinder001.mesh</div>
<div class="t" style="left:918px;top:662px">Particle Material</div>
<div class="tag" style="left:1153px;top:652px;width:62px">cc.Material</div>
<div class="in" style="left:1152px;top:661px;width:436px;height:25px"></div>
<div class="blue" style="left:1155px;top:663px;width:413px;height:20px">particle-add.mtl</div>
<div class="t" style="left:918px;top:701px">Trail Material</div>
<div class="tag" style="left:1153px;top:691px;width:62px">cc.Material</div>
<div class="in" style="left:1152px;top:700px;width:436px;height:25px"></div>
<div class="t" style="left:1160px;top:702px;color:#5e5e5e">cc.Material</div>
<svg class="a" style="left:1574px;top:628px" width="11" height="92" fill="none" stroke="#ccc" stroke-width="1.200"><g><path d="M9 10V1H1v11h4"/><path d="M4 4l6 5-2 1 2 3-1 1-2-3-2 2z" fill="#ccc" stroke="none"/></g><g transform="translate(0,39)"><path d="M9 10V1H1v11h4"/><path d="M4 4l6 5-2 1 2 3-1 1-2-3-2 2z" fill="#ccc" stroke="none"/></g><g transform="translate(0,77)"><path d="M9 10V1H1v11h4"/><path d="M4 4l6 5-2 1 2 3-1 1-2-3-2 2z" fill="#ccc" stroke="none"/></g></svg>

<div class="t" style="left:918px;top:732px">Use GPU</div>
<div class="cb" style="left:1152px;top:735px"></div>
<div class="t" style="left:918px;top:761px">Align Space</div>
<div class="sel" style="left:1152px;top:759px;width:436px;height:24px"></div>
<div class="t" style="left:1163px;top:761px">View</div>
<div class="a" style="left:1570px;top:768px;width:0;height:0;border-top:7px solid #ccc;border-left:4px solid transparent;border-right:4px solid transparent"></div>
<div class="a" style="left:1217px;top:815px;width:72px;height:24px;background:#575757;border-radius:3px;text-align:center;line-height:24px">添加组件</div>
<div class="r" style="left:899px;top:867px"></div>
<div class="mat" style="left:914px;top:864px"></div>
<div class="t" style="left:936px;top:861px;color:#7a7a7a">particle-add.mtl</div>
<svg class="a" style="left:1587px;top:864px" width="13" height="15" fill="none" stroke="#e8861c" stroke-width="1.300"><path d="M3 3V1h6l3 3v8h-2M1 3h7l2 2v9H1zM3 8h5M3 11h5"/></svg>
<div class="a" style="left:899px;top:883px;width:707px;height:1px;background:#5c5c5c"></div>
<div class="a" style="left:1616px;top:490px;width:6px;height:398px;background:#5a5a5a;border-radius:3px"></div>

<!-- BOTTOM -->
<div class="a" style="left:0;top:903px;width:1628px;height:5px;background:#4a4a4a;border-top:1px solid #5a5a5a;box-sizing:border-box"></div>
<div class="bar" style="left:0;top:908px;width:1625px;height:25px;border-radius:0 4px 0 0"></div>
<div class="a" style="left:0;top:908px;width:60px;height:25px;background:#444"></div>
<div class="a" style="left:60px;top:908px;width:1px;height:24px;background:#5c5c5c"></div>
<div class="a" style="left:151px;top:908px;width:1px;height:24px;background:#5c5c5c"></div>
<svg class="a" style="left:0;top:914px" width="14" height="12" fill="none" stroke="#999" stroke-width="1.200"><rect x=".5" y="1" width="13" height="10"/><path d="M3 4l2 2-2 2M6 8h3"/></svg>
<svg class="a" style="left:68px;top:913px" width="12" height="14" fill="#666"><path d="M6 0h3v3L6 5l2 3v5H6V9L3 7 1 9 0 8l3-4-1-1z"/></svg>
<div class="t" style="left:18px;top:910px">控制台</div>
<div class="t" style="left:85px;top:910px">动画编辑器</div>
<div class="ham" style="left:1603px;top:915px"></div>
<div class="a" style="left:0;top:933px;width:1625px;height:33px;background:#484848;border-bottom:1px solid #5c5c5c;box-sizing:border-box"></div>
<svg class="a" style="left:2px;top:943px" width="12" height="13"><path d="M5 0h2v5l3 2 1 4H1l1-4 3-2z" fill="#bbb"/></svg>
<div class="t" style="left:16px;top:939px">清空</div>
<div class="in" style="left:49px;top:937px;width:169px;height:24px"></div>
<div class="cb" style="left:226px;top:942px"></div>
<div class="t" style="left:244px;top:939px">正则</div>
<div class="a" style="left:276px;top:937px;width:65px;height:24px;background:#5c5c5c;border-radius:3px"></div>
<div class="t" style="left:287px;top:939px;color:#ccc">Error</div>
<div class="a" style="left:322px;top:946px;width:0;height:0;border-top:7px solid #ccc;border-left:4px solid transparent;border-right:4px solid transparent"></div>
<svg class="a" style="left:351px;top:942px" width="11" height="14" fill="none" stroke="#ccc" stroke-width="1.300"><path d="M1 1h6l3 3v9H1zM3 7h5M3 10h5"/></svg>
<div class="a" style="left:0;top:966px;width:1628px;height:20px;background:#2e2e2e"></div>

<!-- mesh annotation above all -->
<svg class="a" style="left:0;top:0" width="1628" height="986" fill="none"><path d="M1145 607C1147 602 1150 600 1152 599S1180 600 1190 598 1225 592 1243 591 1280 589 1309 590 1370 593 1405 595 1490 595 1514.500 597 1540 604 1557 610 1585 616 1596 620 1612 625 1615 630 1618 637 1612 642 1595 651 1581 653 1560 654 1548 655 1520 659 1500 658 1440 655 1405 654 1350 654 1309 653 1280 652 1243 651 1205 649 1185 647 1160 645 1147 642 1132 638 1130 632 1131 626 1135 622 1145 615 1152 613 1160 612 1166 613" stroke="#ff0000" stroke-width="2" stroke-linecap="round"/></svg>
</body></html>
